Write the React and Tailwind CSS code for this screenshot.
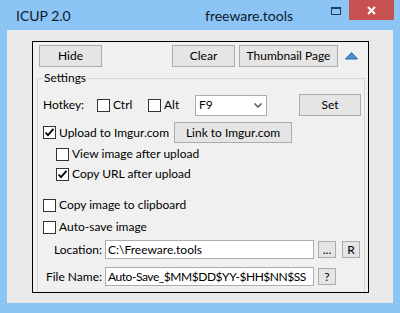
import React from 'react';

// Win8-style dialog: ICUP 2.0 settings window

const Check = ({ checked }) => (
  <div className="w-[13px] h-[13px] shrink-0 border border-[#333333] bg-white flex items-center justify-center">
    {checked && (
      <svg width="11" height="11" viewBox="0 0 11 11">
        <path d="M1.5 5.5 L4 8.2 L9.5 1.8" fill="none" stroke="#000" strokeWidth="1.8" />
      </svg>
    )}
  </div>
);

const Btn = ({ children, className = '' }) => (
  <div className={`flex items-center justify-center shrink-0 whitespace-nowrap bg-[#e5e5e5] border border-[#acacac] text-black ${className}`}>
    {children}
  </div>
);

const Field = ({ value, className = '' }) => (
  <div className={`flex items-center shrink-0 bg-white border border-[#acacac] pl-[2px] overflow-hidden whitespace-nowrap ${className}`}>
    {value}
  </div>
);

export default function App() {
  return (
    <div className="w-[400px] h-[313px] bg-[#8bc4f5] overflow-hidden font-['Lato','Open_Sans',sans-serif] text-[12px] leading-[16px] text-black">
      {/* title bar */}
      <div className="h-[30px] flex items-start">
        <div className="w-[205px] pl-[16px] pt-[6px] text-[14px] leading-[20px] text-[#0c1a2c]">ICUP 2.0</div>
        <div className="pt-[6px] text-[14px] leading-[20px] text-[#0c1a2c]">freeware.tools</div>
        <div className="ml-auto flex items-start">
          <div className="mt-[7px] mr-[8px] w-[10px] h-[8px] border border-[#1f3f60] border-t-2" />
          <div className="mr-[6px] w-[45px] h-[20px] bg-[#c75050] flex items-center justify-center">
            <svg width="9" height="9" viewBox="0 0 9 9">
              <path d="M1 1 L8 8 M8 1 L1 8" stroke="#fff" strokeWidth="2" />
            </svg>
          </div>
        </div>
      </div>

      {/* client area */}
      <div className="ml-[7px] w-[386px] h-[273px] bg-[#e9e9e9] pt-[11px] pl-[25px]">
        <div className="w-[337px] h-[252px] border border-black bg-[#f0f0f0] flex flex-col">
          <div className="flex items-center pt-[3px]">
            <Btn className="ml-[6px] w-[63px] h-[22px]">Hide</Btn>
            <Btn className="ml-[70px] w-[63px] h-[22px]">Clear</Btn>
            <Btn className="ml-[4px] w-[99px] h-[22px]">Thumbnail Page</Btn>
            <svg className="ml-[7px]" width="13" height="8" viewBox="0 0 13 8">
              <path d="M6.5 0.5 L12.5 7 L0.5 7 Z" fill="#4a90d0" stroke="#2e6aa6" strokeWidth="1" />
            </svg>
          </div>

          <fieldset className="mt-[3px] ml-[4px] w-[328px] flex-1 border border-b-0 border-[#d5d5d5] min-w-0">
            <legend className="ml-[5px] px-[1px]">Settings</legend>

            <div className="flex items-center h-[22px] mt-[8px]">
              <span className="ml-[5px] w-[54px]">Hotkey:</span>
              <Check />
              <span className="ml-[3px] w-[35px]">Ctrl</span>
              <Check />
              <span className="ml-[3px] w-[31px]">Alt</span>
              <div className="w-[72px] h-[21px] bg-white border border-[#acacac] flex items-center pl-[3px]">
                <span className="flex-1">F9</span>
                <svg className="mr-[4px]" width="8" height="5" viewBox="0 0 8 5">
                  <path d="M0.5 0.5 L4 4 L7.5 0.5" fill="none" stroke="#555" strokeWidth="1.5" />
                </svg>
              </div>
              <Btn className="ml-[32px] w-[62px] h-[22px]">Set</Btn>
            </div>

            <div className="flex items-center h-[21px] mt-[6px]">
              <div className="ml-[5px]"><Check checked /></div>
              <span className="ml-[3px] w-[115px] whitespace-nowrap">Upload to Imgur.com</span>
              <Btn className="w-[118px] h-[21px]">Link to Imgur.com</Btn>
            </div>

            <div className="flex items-center h-[20px] mt-[1px]">
              <div className="ml-[18px]"><Check /></div>
              <span className="ml-[3px]">View image after upload</span>
            </div>
            <div className="flex items-center h-[20px]">
              <div className="ml-[18px]"><Check checked /></div>
              <span className="ml-[3px]">Copy URL after upload</span>
            </div>

            <div className="flex items-center h-[20px] mt-[11px]">
              <div className="ml-[5px]"><Check /></div>
              <span className="ml-[3px]">Copy image to clipboard</span>
            </div>
            <div className="flex items-center h-[20px] mt-[2px]">
              <div className="ml-[5px]"><Check /></div>
              <span className="ml-[3px]">Auto-save image</span>
            </div>

            <div className="flex items-center h-[19px] mt-[3px]">
              <span className="w-[64px] text-right">Location:</span>
              <Field className="ml-[3px] w-[209px] h-[19px]" value="C:\Freeware.tools" />
              <Btn className="ml-[4px] w-[18px] h-[17px]">...</Btn>
              <Btn className="ml-[6px] w-[18px] h-[17px]">R</Btn>
            </div>

            <div className="flex items-center h-[19px] mt-[8px]">
              <span className="w-[64px] text-right">File Name:</span>
              <Field className="ml-[3px] w-[209px] h-[19px] tracking-[-0.45px]" value="Auto-Save_$MM$DD$YY-$HH$NN$SS" />
              <Btn className="ml-[4px] w-[18px] h-[17px]">?</Btn>
            </div>
          </fieldset>
        </div>
      </div>
    </div>
  );
}
